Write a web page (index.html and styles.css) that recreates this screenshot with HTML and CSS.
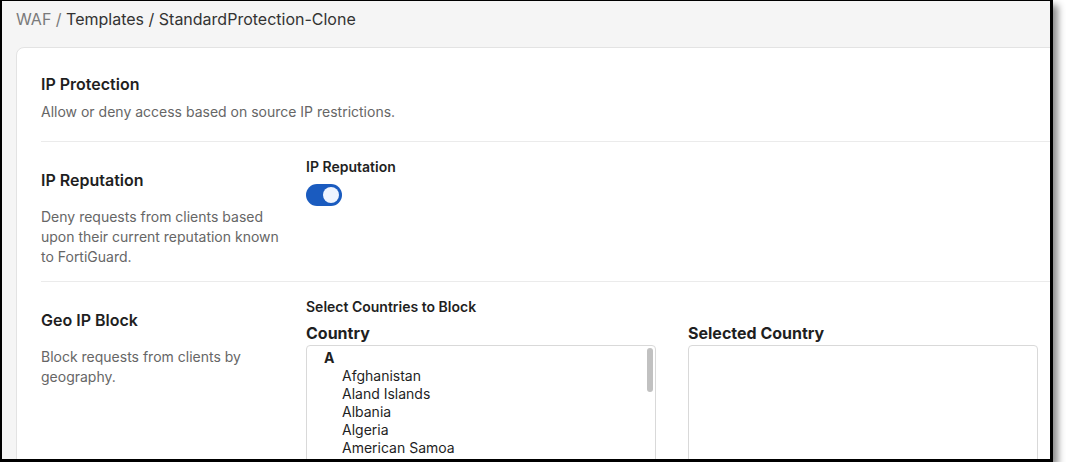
FILE: index.html
```html
<!DOCTYPE html>
<html lang="en">
<head>
<meta charset="utf-8">
<title>WAF Template</title>
<link rel="stylesheet" href="styles.css">
</head>
<body>
<div class="frame">
  <div class="page">
    <nav class="crumbs"><span class="crumb-muted">WAF /</span> Templates / StandardProtection-Clone</nav>
    <section class="card">
      <div class="intro">
        <h2 class="title">IP Protection</h2>
        <p class="desc">Allow or deny access based on source IP restrictions.</p>
      </div>
      <div class="row">
        <div class="side">
          <h3 class="title">IP Reputation</h3>
          <p class="desc">Deny requests from clients based upon their current reputation known to FortiGuard.</p>
        </div>
        <div class="main">
          <div class="label">IP Reputation</div>
          <div class="toggle"><span class="knob"></span></div>
        </div>
      </div>
      <div class="row">
        <div class="side">
          <h3 class="title">Geo IP Block</h3>
          <p class="desc">Block requests from clients by geography.</p>
        </div>
        <div class="main">
          <div class="label">Select Countries to Block</div>
          <div class="pickers">
            <div class="picker">
              <div class="picker-head">Country</div>
              <div class="listbox">
                <div class="group">A</div>
                <div class="item">Afghanistan</div>
                <div class="item">Aland Islands</div>
                <div class="item">Albania</div>
                <div class="item">Algeria</div>
                <div class="item">American Samoa</div>
                <div class="item">Andorra</div>
                <div class="item">Angola</div>
                <span class="thumb"></span>
              </div>
            </div>
            <div class="picker">
              <div class="picker-head">Selected Country</div>
              <div class="listbox"></div>
            </div>
          </div>
        </div>
      </div>
    </section>
  </div>
</div>
</body>
</html>
```
FILE: styles.css
```css
* { box-sizing: border-box; }
html, body { margin: 0; padding: 0; background: #ffffff; }
body {
  font-family: Inter, "Noto Sans", "Liberation Sans", sans-serif;
  color: #1f1f1f;
}
.frame {
  width: 1053px;
  height: 462px;
  border-style: solid;
  border-color: #000;
  border-width: 1px 3px 3px 2px;
  box-shadow: 5px 5px 7px rgba(0, 0, 0, 0.45);
  overflow: hidden;
  background: #f5f5f5;
}
.page {
  width: 1300px;
  padding: 6px 14px 0 14px;
}
.crumbs {
  font-size: 16px;
  line-height: 24px;
  color: #333;
  margin-bottom: 16px;
}
.crumb-muted { color: #7a7a7a; }
.card {
  background: #fff;
  border: 1px solid #e3e3e3;
  border-radius: 8px;
  padding: 24px 24px 0 24px;
  height: 600px;
}
.title {
  margin: 0;
  font-size: 16px;
  line-height: 24px;
  font-weight: 600;
  color: #1f1f1f;
}
.desc {
  margin: 6px 0 0 0;
  font-size: 14px;
  line-height: 20px;
  color: #666;
}
.intro { padding-bottom: 19px; }
.row {
  display: flex;
  border-top: 1px solid #ebebeb;
  padding: 15px 0 14px 0;
}
.side {
  width: 265px;
  flex: none;
  padding: 11px 16px 0 0;
}
.side .desc { margin-top: 15px; }
.main { flex: 1; }
.label {
  font-size: 14px;
  line-height: 20px;
  font-weight: 600;
  color: #1f1f1f;
}
.toggle {
  margin-top: 7px;
  width: 36px;
  height: 22px;
  border-radius: 11px;
  background: #1a5bbf;
  display: flex;
  align-items: center;
  justify-content: flex-end;
  padding-right: 3px;
}
.knob {
  width: 16px;
  height: 16px;
  border-radius: 50%;
  background: #eef4ff;
}
.pickers {
  display: flex;
  gap: 32px;
  margin-top: 4px;
}
.picker { width: 350px; }
.picker-head {
  font-size: 16px;
  line-height: 24px;
  font-weight: 700;
  color: #1f1f1f;
}
.listbox {
  position: relative;
  height: 200px;
  border: 1px solid #d9d9d9;
  border-radius: 4px;
  padding-top: 3px;
  font-size: 14px;
  line-height: 18px;
  color: #1f1f1f;
  overflow: hidden;
}
.group {
  padding-left: 17px;
  font-weight: 700;
}
.item { padding-left: 35px; }
.thumb {
  position: absolute;
  right: 2px;
  top: 2px;
  width: 6px;
  height: 44px;
  border-radius: 3px;
  background: #c1c1c1;
}
```
